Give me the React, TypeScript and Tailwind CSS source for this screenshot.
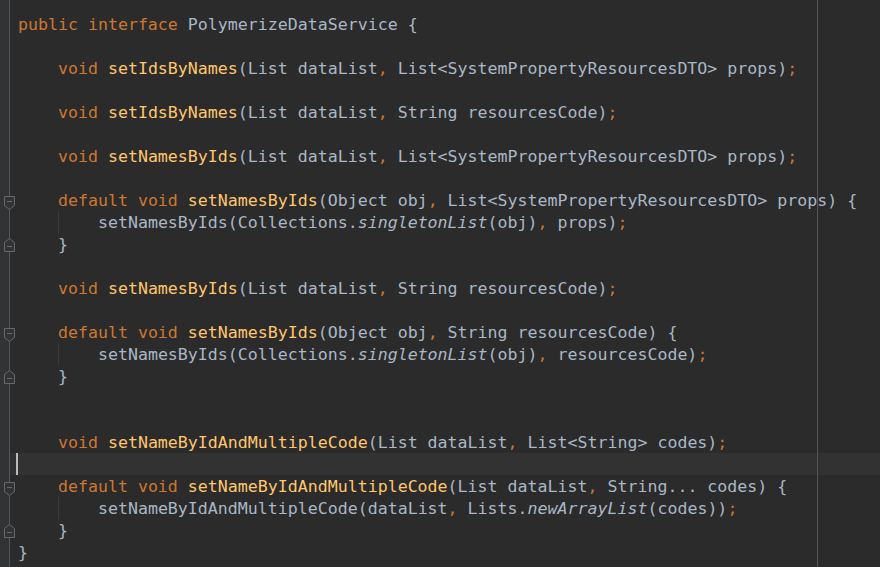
import React from "react";

const K = ({ children }: { children: React.ReactNode }) => (
  <span className="text-[#cc7832]">{children}</span>
);
const M = ({ children }: { children: React.ReactNode }) => (
  <span className="text-[#ffc66d]">{children}</span>
);
const I = ({ children }: { children: React.ReactNode }) => (
  <span className="italic">{children}</span>
);

const FoldStart = () => (
  <svg width="12" height="14" viewBox="0 0 12 14" className="block">
    <path d="M0.5 0.5 H10.5 V9.5 L5.5 13.5 L0.5 9.5 Z" fill="#313335" stroke="#686868" strokeWidth="1" />
    <path d="M3 5.5 H8" stroke="#686868" strokeWidth="1" />
  </svg>
);
const FoldEnd = () => (
  <svg width="12" height="14" viewBox="0 0 12 14" className="block">
    <path d="M5.5 0.5 L10.5 4.5 V13.5 H0.5 V4.5 Z" fill="#313335" stroke="#686868" strokeWidth="1" />
    <path d="M3 8.5 H8" stroke="#686868" strokeWidth="1" />
  </svg>
);

const lines: React.ReactNode[] = [
  <>
    <K>public interface </K>PolymerizeDataService {"{"}
  </>,
  "",
  <>
    {"    "}
    <K>void </K>
    <M>setIdsByNames</M>(List dataList<K>, </K>List&lt;SystemPropertyResourcesDTO&gt; props)<K>;</K>
  </>,
  "",
  <>
    {"    "}
    <K>void </K>
    <M>setIdsByNames</M>(List dataList<K>, </K>String resourcesCode)<K>;</K>
  </>,
  "",
  <>
    {"    "}
    <K>void </K>
    <M>setNamesByIds</M>(List dataList<K>, </K>List&lt;SystemPropertyResourcesDTO&gt; props)<K>;</K>
  </>,
  "",
  <>
    {"    "}
    <K>default void </K>
    <M>setNamesByIds</M>(Object obj<K>, </K>List&lt;SystemPropertyResourcesDTO&gt; props) {"{"}
  </>,
  <>
    {"        "}setNamesByIds(Collections.<I>singletonList</I>(obj)<K>, </K>props)<K>;</K>
  </>,
  <>{"    }"}</>,
  "",
  <>
    {"    "}
    <K>void </K>
    <M>setNamesByIds</M>(List dataList<K>, </K>String resourcesCode)<K>;</K>
  </>,
  "",
  <>
    {"    "}
    <K>default void </K>
    <M>setNamesByIds</M>(Object obj<K>, </K>String resourcesCode) {"{"}
  </>,
  <>
    {"        "}setNamesByIds(Collections.<I>singletonList</I>(obj)<K>, </K>resourcesCode)<K>;</K>
  </>,
  <>{"    }"}</>,
  "",
  "",
  <>
    {"    "}
    <K>void </K>
    <M>setNameByIdAndMultipleCode</M>(List dataList<K>, </K>List&lt;String&gt; codes)<K>;</K>
  </>,
  "",
  <>
    {"    "}
    <K>default void </K>
    <M>setNameByIdAndMultipleCode</M>(List dataList<K>, </K>String... codes) {"{"}
  </>,
  <>
    {"        "}setNameByIdAndMultipleCode(dataList<K>, </K>Lists.<I>newArrayList</I>(codes))<K>;</K>
  </>,
  <>{"    }"}</>,
  <>{"}"}</>,
];

const foldStarts = new Set([8, 14, 21]);
const foldEnds = new Set([10, 16, 23]);
const guides = new Set([9, 15, 22]);
const CURRENT = 20;

export default function App() {
  return (
    <div className="relative flex h-[567px] w-[880px] overflow-hidden bg-[#2b2b2b] font-['DejaVu_Sans_Mono',monospace] text-[16.6px] text-[#a9b7c6]">
      {/* gutter */}
      <div className="relative h-full w-[10px] shrink-0 border-r border-[#555555] bg-[#313335]">
        <div className="pt-[13px]">
          {lines.map((_, i) => (
            <div key={i} className="relative h-[22px]">
              {foldStarts.has(i) && (
                <div className="absolute left-[4px] top-[7px]">
                  <FoldStart />
                </div>
              )}
              {foldEnds.has(i) && (
                <div className="absolute left-[4px] top-[5px]">
                  <FoldEnd />
                </div>
              )}
            </div>
          ))}
        </div>
      </div>
      {/* code */}
      <div className="relative flex-1 pt-[13px]">
        {lines.map((l, i) => (
          <div
            key={i}
            className={`relative h-[22px] whitespace-pre pl-[8px] leading-[22px] ${i === CURRENT ? "bg-[#323232]" : ""}`}
          >
            {guides.has(i) && <div className="absolute left-[48px] top-0 h-full w-px bg-[#3b3b3b]" />}
            {i === CURRENT && <div className="absolute left-[6px] top-0 h-full w-[2px] bg-[#bbbbbb]" />}
            <span className="relative top-[1px]">{l === "" ? " " : l}</span>
          </div>
        ))}
        <div className="absolute left-[807px] top-0 h-full w-px bg-[#555555]" />
      </div>
    </div>
  );
}
